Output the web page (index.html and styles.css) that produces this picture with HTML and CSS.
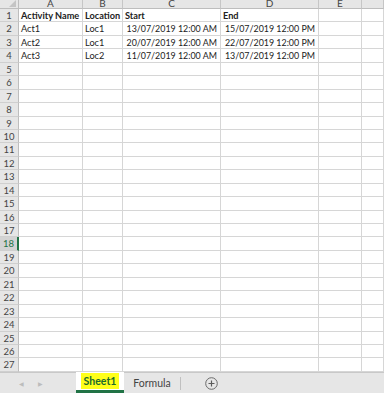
FILE: index.html
```html
<!DOCTYPE html>
<html lang="en">
<head>
    <meta charset="UTF-8">
    <meta name="viewport" content="width=device-width, initial-scale=1.0">
    <title>Sheet1</title>
    <link rel="stylesheet" href="styles.css">
</head>
<body>
    <div class="sheet" id="sheet">
        <div class="corner"><span class="tri"></span></div>
        <div class="colhdr">A</div>
        <div class="colhdr">B</div>
        <div class="colhdr">C</div>
        <div class="colhdr">D</div>
        <div class="colhdr">E</div>
        <div class="colhdr last"></div>
    </div>

    <div class="tabbar">
        <div class="nav">
            <span class="arrow">&#9664;</span>
            <span class="arrow">&#9654;</span>
        </div>
        <div class="tab active"><span class="hl">Sheet1</span></div>
        <div class="tab wide">Formula</div>
        <div class="sep"></div>
        <div class="add">
            <svg width="13" height="13" viewBox="0 0 13 13">
                <circle cx="6.5" cy="6.5" r="5.8" fill="none" stroke="#6a6a6a" stroke-width="1"/>
                <path d="M6.5 3.5v6M3.5 6.5h6" stroke="#5a5a5a" stroke-width="1.2"/>
            </svg>
        </div>
    </div>

    <script>
        // Cell data, row by row
        const rows = [
            ['Activity Name', 'Location', 'Start', 'End'],
            ['Act1', 'Loc1', '13/07/2019 12:00 AM', '15/07/2019 12:00 PM'],
            ['Act2', 'Loc1', '20/07/2019 12:00 AM', '22/07/2019 12:00 PM'],
            ['Act3', 'Loc2', '11/07/2019 12:00 AM', '13/07/2019 12:00 PM']
        ];

        const sheet = document.getElementById('sheet');
        for (let r = 1; r <= 27; r++) {
            const hdr = document.createElement('div');
            hdr.className = 'rowhdr' + (r === 18 ? ' sel' : '');
            hdr.textContent = r;
            sheet.appendChild(hdr);
            for (let c = 0; c < 6; c++) {
                const cell = document.createElement('div');
                cell.className = 'cell';
                const val = rows[r - 1] ? rows[r - 1][c] : '';
                if (val) {
                    cell.textContent = val;
                    if (r === 1) cell.classList.add('bold');
                    if (r > 1 && c > 1) cell.classList.add('num');
                }
                sheet.appendChild(cell);
            }
        }
    </script>
</body>
</html>
```

FILE: styles.css
```css
body {
    margin: 0;
    width: 384px;
    height: 393px;
    overflow: hidden;
    background-color: #ffffff;
    font-family: Lato, "Liberation Sans", sans-serif;
    font-size: 9.2px;
    color: #222;
}
.sheet {
    display: grid;
    grid-template-columns: 19px 64px 40px 98px 98px 43px 1fr;
    grid-template-rows: 9px repeat(27, 13.45px);
    height: 372px;
    overflow: hidden;
}
.sheet > div {
    box-sizing: border-box;
    border-right: 1px solid #d6d6d6;
    border-bottom: 1px solid #d6d6d6;
    overflow: hidden;
    white-space: nowrap;
}
.corner {
    background-color: #e6e6e6;
    position: relative;
    border-color: #bdbdbd !important;
}
.tri {
    position: absolute;
    right: 2px;
    bottom: 1px;
    width: 0;
    height: 0;
    border-left: 7px solid transparent;
    border-bottom: 7px solid #c4c4c4;
}
.colhdr {
    background-color: #e6e6e6;
    color: #444;
    text-align: center;
    font-size: 10px;
    line-height: 7px;
    border-right-color: #c6c6c6 !important;
    border-bottom-color: #bdbdbd !important;
}
.rowhdr {
    background-color: #e6e6e6;
    color: #444;
    text-align: center;
    font-size: 9.5px;
    line-height: 14px;
    border-right-color: #bdbdbd !important;
    border-bottom-color: #cfcfcf !important;
}
.rowhdr.sel {
    background-color: #d3d3d3;
    color: #217346;
    border-right: 2px solid #217346 !important;
}
.cell {
    padding: 0 3px 0 2px;
    line-height: 14px;
}
.cell.bold {
    font-weight: bold;
}
.cell.num {
    text-align: right;
    font-size: 8.9px;
}
.tabbar {
    height: 21px;
    box-sizing: border-box;
    border-top: 1px solid #c8c8c8;
    background-color: #e6e6e6;
    display: flex;
    align-items: stretch;
}
.nav {
    width: 76px;
    display: flex;
    align-items: center;
    gap: 14px;
    padding-left: 19px;
    box-sizing: border-box;
}
.arrow {
    font-size: 6px;
    color: #bcbcbc;
}
.tab {
    width: 48px;
    display: flex;
    align-items: center;
    justify-content: center;
    font-size: 10.5px;
    color: #444;
}
.tab.wide {
    width: 56px;
}
.tab.active {
    background-color: #ffffff;
    border-bottom: 3px solid #217346;
    box-sizing: border-box;
    margin-top: -1px;
}
.hl {
    background-color: #ffff1a;
    color: #1c6a2d;
    font-weight: bold;
    padding: 2px 3px;
}
.sep {
    width: 1px;
    background-color: #c0c0c0;
    margin: 4px 0 3px 0;
}
.add {
    display: flex;
    align-items: center;
    padding-left: 24px;
}
```
